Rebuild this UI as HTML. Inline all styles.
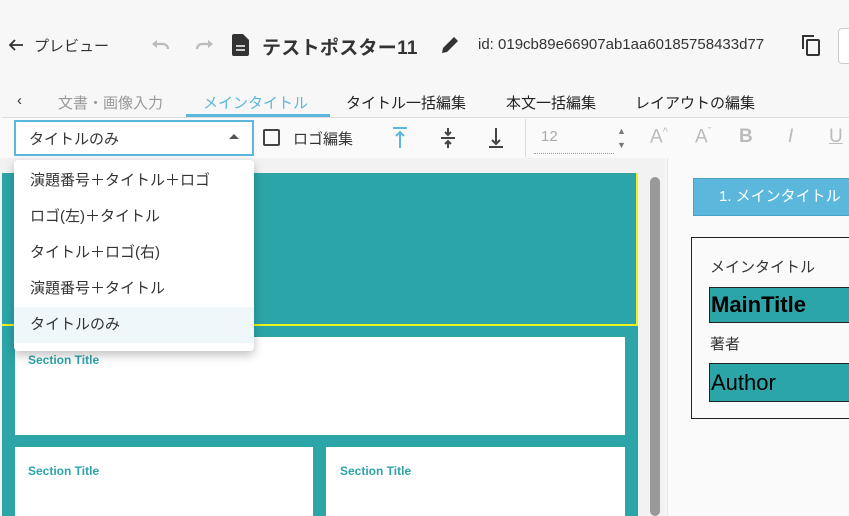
<!DOCTYPE html>
<html><head><meta charset="utf-8"><style>
*{box-sizing:border-box;margin:0;padding:0}
body{width:849px;height:516px;overflow:hidden;background:#f7f7f7;font-family:"Liberation Sans","Noto Sans CJK JP",sans-serif;position:relative;color:#222}
.a{position:absolute}
.tab{position:absolute;top:92px;font-size:15px;color:#222}
.tb{font-size:19px;color:#bbb}
.item{position:absolute;left:0;width:240px;height:36px;line-height:36px;padding-left:16px;font-size:15px;color:#333}
.st{position:absolute;font-size:12px;font-weight:bold;color:#2ca5a9}
</style></head><body>
<!-- header -->
<svg class="a" style="left:8px;top:38px" width="16" height="14" viewBox="0 0 16 14"><path d="M15 7H2M7 2L2 7l5 5" stroke="#333" stroke-width="1.8" fill="none"/></svg>
<div class="a" style="left:34px;top:35px;font-size:15px;color:#333">プレビュー</div>
<svg class="a" style="left:150px;top:35px" width="64" height="20" viewBox="0 0 64 20"><path d="M5 9h8a5 5 0 0 1 5 5" stroke="#bbb" stroke-width="2.2" fill="none"/><path d="M2 9l5-4v8z" fill="#bbb"/><path d="M60 9h-8a5 5 0 0 0-5 5" stroke="#bbb" stroke-width="2.2" fill="none"/><path d="M63 9l-5-4v8z" fill="#bbb"/></svg>
<svg class="a" style="left:232px;top:34px" width="18" height="22" viewBox="0 0 18 22"><path d="M2 0h9l6 6v14a2 2 0 0 1-2 2H2a2 2 0 0 1-2-2V2a2 2 0 0 1 2-2z" fill="#333"/><path d="M4 12h9M4 16h9" stroke="#fff" stroke-width="1.6"/></svg>
<div class="a" style="left:262px;top:33px;font-size:19px;font-weight:bold;color:#333;letter-spacing:0.3px">テストポスター11</div>
<svg class="a" style="left:440px;top:35px" width="20" height="20" viewBox="0 0 20 20"><path d="M2 18l1-5L14 2l4 4L7 17z" fill="#333"/></svg>
<div class="a" style="left:478px;top:36px;font-size:15px;color:#333">id: 019cb89e66907ab1aa60185758433d77</div>
<svg class="a" style="left:800px;top:33px" width="22" height="24" viewBox="0 0 22 24"><path d="M3 16V3h11" stroke="#333" stroke-width="2" fill="none"/><rect x="7" y="7" width="12" height="15" rx="1" stroke="#333" stroke-width="2" fill="none"/></svg>
<div class="a" style="left:838px;top:28px;width:30px;height:36px;border:1px solid #ccc;border-radius:4px;background:#fff"></div>
<!-- tabs -->
<div class="tab" style="left:17px;color:#333">‹</div>
<div class="tab" style="left:58px;color:#999">文書・画像入力</div>
<div class="tab" style="left:203px;color:#5bb8dc">メインタイトル</div>
<div class="a" style="left:186px;top:114px;width:144px;height:3px;background:#5bb8dc"></div>
<div class="tab" style="left:346px">タイトル一括編集</div>
<div class="tab" style="left:506px">本文一括編集</div>
<div class="tab" style="left:635px">レイアウトの編集</div>
<div class="a" style="left:2px;top:117px;width:847px;height:1px;background:#ddd"></div>
<!-- toolbar -->
<div class="a" style="left:0;top:118px;width:849px;height:40px;background:#fafafa"></div>
<div class="a" style="left:14px;top:120px;width:240px;height:36px;border:2px solid #5bb8dc;background:#fff"></div>
<div class="a" style="left:29px;top:128px;font-size:15px;color:#333">タイトルのみ</div>
<div class="a" style="left:229px;top:134px;width:0;height:0;border-left:5px solid transparent;border-right:5px solid transparent;border-bottom:5px solid #555"></div>
<div class="a" style="left:263px;top:129px;width:17px;height:17px;border:2px solid #444;border-radius:2px"></div>
<div class="a" style="left:293px;top:128px;font-size:15px;color:#333">ロゴ編集</div>
<svg class="a" style="left:390px;top:126px" width="120" height="24" viewBox="0 0 120 24"><path d="M3 2h14M10 22V6M6 10l4-4 4 4" stroke="#5bb8dc" stroke-width="2" fill="none"/><path d="M51 12h14M58 2v7M55 6l3 3 3-3M58 22v-7M55 18l3-3 3 3" stroke="#444" stroke-width="2" fill="none"/><path d="M99 21h14M106 2v16M102 14l4 4 4-4" stroke="#444" stroke-width="2" fill="none"/></svg>
<div class="a" style="left:525px;top:119px;width:1px;height:38px;background:#ddd"></div>
<div class="a" style="left:541px;top:128px;font-size:15px;color:#aaa">12</div>
<div class="a" style="left:534px;top:153px;width:80px;border-top:1px dotted #999"></div>
<div class="a" style="left:617px;top:124px;font-size:9px;color:#777;line-height:14px">▲<br>▼</div>
<div class="a tb" style="left:650px;top:126px">A<sup style="font-size:11px">^</sup></div>
<div class="a tb" style="left:695px;top:126px">A<sup style="font-size:11px">ˇ</sup></div>
<div class="a tb" style="left:739px;top:126px;font-weight:bold">B</div>
<div class="a tb" style="left:788px;top:126px;font-style:italic">I</div>
<div class="a tb" style="left:829px;top:126px;text-decoration:underline">U</div>
<!-- canvas -->
<div class="a" style="left:0;top:158px;width:665px;height:358px;background:#f2f2f2"></div>
<div class="a" style="left:2px;top:173px;width:636px;height:343px;background:#2ca5a9"></div>
<div class="a" style="left:2px;top:324px;width:636px;height:2px;background:#f0f020"></div>
<div class="a" style="left:636px;top:173px;width:2px;height:152px;background:#f0f020"></div>
<div class="a" style="left:15px;top:337px;width:610px;height:98px;background:#fff"></div>
<div class="a" style="left:15px;top:447px;width:298px;height:69px;background:#fff"></div>
<div class="a" style="left:326px;top:447px;width:299px;height:69px;background:#fff"></div>
<div class="st" style="left:28px;top:353px">Section Title</div>
<div class="st" style="left:28px;top:464px">Section Title</div>
<div class="st" style="left:340px;top:464px">Section Title</div>
<div class="a" style="left:650px;top:177px;width:10px;height:339px;background:#999;border-radius:5px"></div>
<!-- right panel -->
<div class="a" style="left:667px;top:158px;width:182px;height:358px;background:#fafafa;border-left:1px solid #e5e5e5"></div>
<div class="a" style="left:693px;top:178px;width:170px;height:38px;background:#5bb8dc;border:1px solid #4aa0c0;color:#fff;font-size:15px;line-height:36px;padding-left:25px;white-space:nowrap">1. メインタイトル</div>
<div class="a" style="left:691px;top:237px;width:170px;height:182px;border:1px solid #222;background:#fafafa"></div>
<div class="a" style="left:710px;top:256px;font-size:15px;color:#333">メインタイトル</div>
<div class="a" style="left:709px;top:287px;width:150px;height:36px;background:#2ca5a9;border:1px solid #222;font-size:22px;font-weight:bold;color:#000;line-height:34px;padding-left:1px">MainTitle</div>
<div class="a" style="left:710px;top:333px;font-size:15px;color:#333">著者</div>
<div class="a" style="left:709px;top:363px;width:150px;height:39px;background:#2ca5a9;border:1px solid #222;font-size:22px;color:#000;line-height:37px;padding-left:1px">Author</div>
<!-- dropdown -->
<div class="a" style="left:14px;top:160px;width:240px;height:191px;background:#fff;border-radius:4px;box-shadow:0 4px 10px rgba(0,0,0,.25);overflow:hidden">
<div class="item" style="top:3px">演題番号＋タイトル＋ロゴ</div>
<div class="item" style="top:39px">ロゴ(左)＋タイトル</div>
<div class="item" style="top:75px">タイトル＋ロゴ(右)</div>
<div class="item" style="top:111px">演題番号＋タイトル</div>
<div class="item" style="top:147px;background:#f0f7fb">タイトルのみ</div>
</div>
</body></html>
